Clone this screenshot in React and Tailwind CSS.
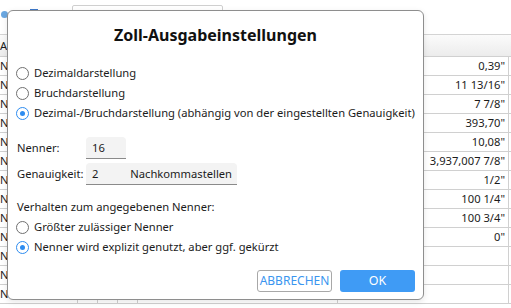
import { useState } from "react";

const values = ['0,39"', '11 13/16"', '7 7/8"', '393,70"', '10,08"', '3,937,007 7/8"', '1/2"', '100 1/4"', '100 3/4"', '0"', "", "", ""];

export default function App() {
  const [mode, setMode] = useState(2);
  const [nenner, setNenner] = useState(1);

  return (
    <div className="relative w-[511px] h-[308px] overflow-hidden bg-white text-[11.2px] text-[#1b1b1b] font-['Noto_Sans',sans-serif]">
      {/* app behind the dialog */}
      <div className="h-[35px] flex items-start border-b border-[#d4d4d4]">
        <div className="mt-[11px] ml-[1px] w-[7px] h-[7px] rounded-sm bg-[#6aa7e0]" />
        <div className="mt-[9px] ml-[22px] w-[8px] h-[4px] bg-[#3d78c8]" />
        <div className="mt-[5px] ml-[34px] w-[151px] h-[24px] border border-[#cfcfcf] rounded-[2px]" />
      </div>
      <div className="h-[22px] grid grid-cols-[338px_171px_2px] bg-gradient-to-b from-[#fbfbfb] to-[#ececec] border-b border-[#d0d0d0]">
        <div className="leading-[22px]">Ar</div>
        <div />
        <div />
      </div>
      {values.map((v, i) => (
        <div key={i} className="h-[19px] grid grid-cols-[78px_20px_20px_20px_200px_171px_2px] border-b border-[#d0d0d0]">
          <div className="border-r border-[#d0d0d0] leading-[18px]">N-</div>
          <div className="border-r border-[#d0d0d0]" />
          <div className="border-r border-[#d0d0d0]" />
          <div className="border-r border-[#d0d0d0]" />
          <div className="border-r border-[#d0d0d0]" />
          <div className="border-r border-[#d0d0d0] text-right pr-[3px] leading-[18px] whitespace-nowrap">{v}</div>
          <div />
        </div>
      ))}

      {/* dialog */}
      <div className="absolute left-[7px] top-[10px] w-[417px] h-[290px] bg-white border border-[#8e8e8e] rounded-[6px] shadow-[0_2px_6px_rgba(0,0,0,0.1)] flex flex-col px-[8px] pt-[12px]">
        <h1 className="h-[24px] leading-[24px] text-center text-[16px] font-bold text-[#111]">Zoll-Ausgabeinstellungen</h1>

        <div className="mt-[16px] flex flex-col">
          <Radio checked={mode === 0} onClick={() => setMode(0)} label="Dezimaldarstellung" />
          <Radio checked={mode === 1} onClick={() => setMode(1)} label="Bruchdarstellung" />
          <Radio checked={mode === 2} onClick={() => setMode(2)} label="Dezimal-/Bruchdarstellung (abhängig von der eingestellten Genauigkeit)" />
        </div>

        <div className="mt-[14px] flex items-center h-[22px] pl-[1px]">
          <div className="w-[69px]">Nenner:</div>
          <div className="h-[22px] w-[40px] bg-[#f3f3f3] rounded-t-[4px] border-b border-[#8a8a8a] pl-[6px] leading-[21px]">16</div>
        </div>
        <div className="mt-[4px] flex items-center h-[22px] pl-[1px]">
          <div className="w-[69px]">Genauigkeit:</div>
          <div className="h-[22px] w-[151px] bg-[#f3f3f3] rounded-t-[4px] border-b border-[#8a8a8a] pl-[6px] pr-[5px] leading-[21px] flex justify-between">
            <span>2</span>
            <span>Nachkommastellen</span>
          </div>
        </div>

        <div className="mt-[12px] h-[20px] leading-[20px] pl-[1px]">Verhalten zum angegebenen Nenner:</div>
        <div className="flex flex-col">
          <Radio checked={nenner === 0} onClick={() => setNenner(0)} label="Größter zulässiger Nenner" />
          <Radio checked={nenner === 1} onClick={() => setNenner(1)} label="Nenner wird explizit genutzt, aber ggf. gekürzt" />
        </div>

        <div className="mt-[13px] flex justify-end gap-[8px]">
          <button className="w-[75px] h-[22px] rounded-[3px] border border-[#a8a8a8] bg-white text-[#3a95ef] text-[12px]">ABBRECHEN</button>
          <button className="w-[75px] h-[22px] rounded-[3px] bg-[#3f9bf5] text-white text-[12.5px]">OK</button>
        </div>
      </div>
    </div>
  );
}

function Radio({ checked, onClick, label }) {
  return (
    <div onClick={onClick} className="h-[20px] flex items-center gap-[5px] cursor-default whitespace-nowrap">
      <span className={`shrink-0 w-[13px] h-[13px] rounded-full border flex items-center justify-center bg-white ${checked ? "border-[#2d8cf0]" : "border-[#707070]"}`}>
        {checked && <span className="w-[5px] h-[5px] rounded-full bg-[#2d8cf0]" />}
      </span>
      <span>{label}</span>
    </div>
  );
}
